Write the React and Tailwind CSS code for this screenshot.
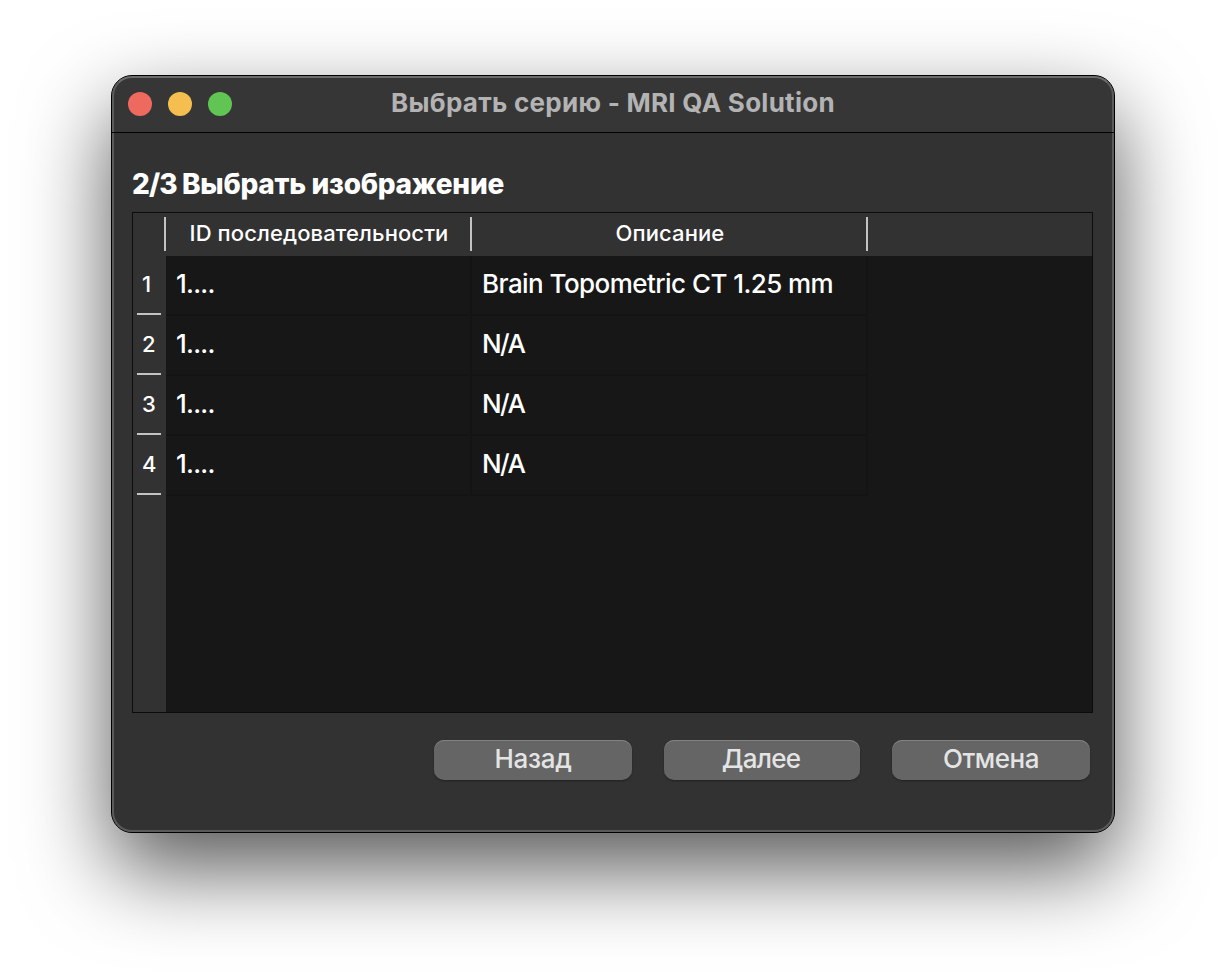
const rows = [
  { id: "1....", description: "Brain Topometric CT 1.25 mm", tracking: "tracking-[-0.56px]" },
  { id: "1....", description: "N/A", tracking: "tracking-[-1.6px]" },
  { id: "1....", description: "N/A", tracking: "tracking-[-1.6px]" },
  { id: "1....", description: "N/A", tracking: "tracking-[-1.6px]" },
];

function TitleBar() {
  return (
    <header className="grid h-[57px] shrink-0 grid-cols-[1fr_auto_1fr] items-center border-b border-black bg-[#363636] px-4">
      <div className="flex gap-4">
        <span className="size-6 rounded-full bg-[#ee6a5f]" />
        <span className="size-6 rounded-full bg-[#f5bf4f]" />
        <span className="size-6 rounded-full bg-[#61c554]" />
      </div>
      <h1 className="pb-0.5 text-[26px] leading-8 font-bold tracking-[0.27px] whitespace-nowrap text-[#b3b3b3]">
        <span>Выбрать серию - MRI QA Solution</span>
      </h1>
    </header>
  );
}

function HeaderCell({ children }) {
  return (
    <div className="flex h-[34px] items-center justify-center border-r-2 border-[#c3c3c3] pb-0.5 pl-0.5 text-[22px] font-[450] tracking-[0.1px]">
      <span>{children}</span>
    </div>
  );
}

function SeriesTable() {
  return (
    <section className="flex h-[501px] flex-col border border-[#0c0c0c] bg-[#171717] text-white">
      <div className="grid h-[43px] shrink-0 grid-cols-[33px_306px_396px_1fr] bg-[#323232] pt-1">
        <HeaderCell />
        <HeaderCell>ID последовательности</HeaderCell>
        <HeaderCell>Описание</HeaderCell>
      </div>
      <div className="flex flex-1">
        <div className="w-[33px] bg-[#323232] px-1">
          {rows.map((row, i) => (
            <div
              key={i}
              className="mr-px flex h-[60px] items-center border-b-2 border-[#c3c3c3] pl-[5px] text-[22px] font-medium first:h-[59px]"
            >
              {i + 1}
            </div>
          ))}
        </div>
        <div>
          {rows.map((row, i) => (
            <div key={i} className="grid h-[60px] grid-cols-[306px_396px] text-[26px] font-[450]">
              <div className="flex items-center border-r-2 border-b-2 border-[#141414] pb-[3px] pl-2.5 tracking-[-0.75px]">
                <span>{row.id}</span>
              </div>
              <div className={`${row.tracking} flex items-center border-r-2 border-b-2 border-[#141414] pb-[3px] pl-2.5`}>
                <span>{row.description}</span>
              </div>
            </div>
          ))}
        </div>
      </div>
    </section>
  );
}

function PushButton({ children, className }) {
  return (
    <button
      className={`${className} flex h-10 items-center justify-center rounded-[10px] bg-[#656565] pb-[3px] text-[26px] font-[450] text-[#e4e4e4] shadow-[0_1px_2px_rgba(0,0,0,0.35),inset_0_1px_0_#828282]`}
    >
      <span>{children}</span>
    </button>
  );
}

export default function App() {
  return (
    <div className="h-[980px] w-[1226px] overflow-hidden bg-white pt-[75px] pl-[111px] font-['Inter',sans-serif]">
      <main className="relative flex h-[758px] w-[1004px] flex-col overflow-visible rounded-[21px] border border-black bg-[#323232] shadow-[0_36px_86px_rgba(0,0,0,0.66)]">
        <div className="flex flex-1 flex-col overflow-hidden rounded-[20px]">
          <TitleBar />
          <div className="flex flex-col pr-[21px] pl-5">
            <h2 className="mt-[34px] mb-[10px] h-[35px] text-[28px] leading-[35px] font-extrabold tracking-[-0.27px] text-white">
              <span className="tracking-[-0.9px]">2/3 </span>
              <span>Выбрать изображение</span>
            </h2>
            <SeriesTable />
            <div className="mt-[27px] flex justify-end pr-[3px]">
              <PushButton className="mr-8 w-[198px] tracking-[-0.3px]">Назад</PushButton>
              <PushButton className="mr-8 w-[196px] pr-0.5 tracking-[-0.7px]">Далее</PushButton>
              <PushButton className="w-[198px] tracking-[-0.45px]">Отмена</PushButton>
            </div>
          </div>
        </div>
        <div className="pointer-events-none absolute inset-0 rounded-[20px] border-2 border-[#5b5b5b] border-t-[#6c6c6c]" />
        <div className="pointer-events-none absolute inset-x-0 top-14 h-px bg-black" />
      </main>
    </div>
  );
}
